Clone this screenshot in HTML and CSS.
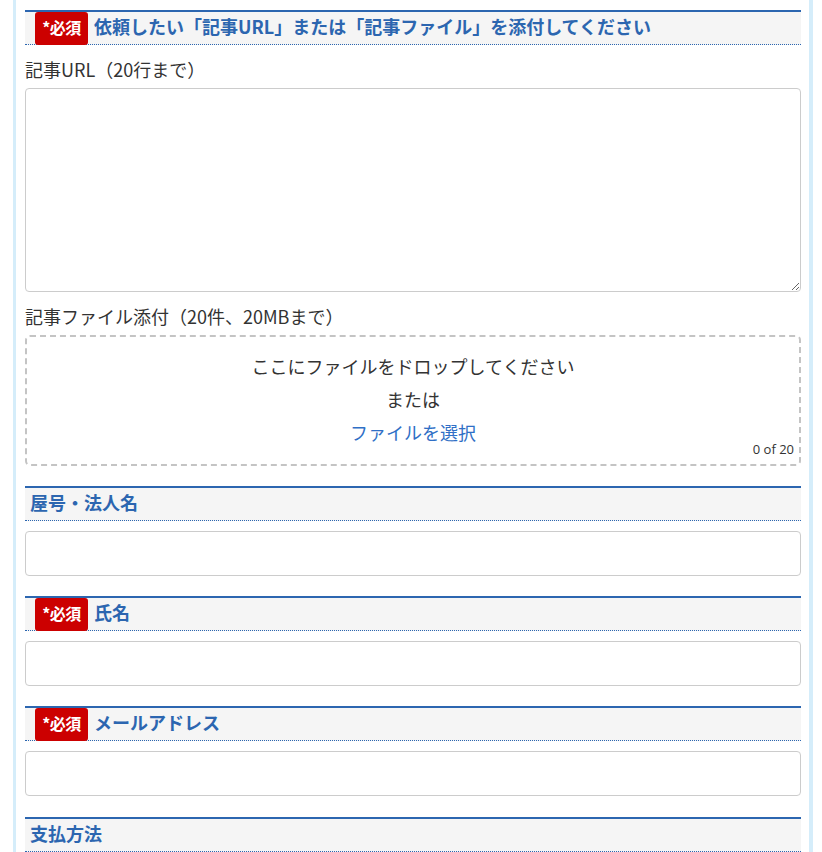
FILE: index.html
```html
<!DOCTYPE html>
<html lang="ja">
<head>
<meta charset="utf-8">
<title>フォーム</title>
<link rel="stylesheet" href="styles.css">
</head>
<body>
<div class="form">
  <section class="field field-first">
    <h3 class="field-head"><span class="req">*必須</span><span class="head-text">依頼したい「記事URL」または「記事ファイル」を添付してください</span></h3>
    <label class="sub-label">記事URL（20行まで）</label>
    <textarea class="ta"></textarea>
    <label class="sub-label">記事ファイル添付（20件、20MBまで）</label>
    <div class="drop">
      <p class="drop-line">ここにファイルをドロップしてください</p>
      <p class="drop-line">または</p>
      <p class="drop-line"><a class="drop-link">ファイルを選択</a></p>
      <span class="drop-count">0 of 20</span>
    </div>
  </section>
  <section class="field">
    <h3 class="field-head plain"><span class="head-text">屋号・法人名</span></h3>
    <input class="inp" type="text">
  </section>
  <section class="field">
    <h3 class="field-head"><span class="req">*必須</span><span class="head-text">氏名</span></h3>
    <input class="inp" type="text">
  </section>
  <section class="field">
    <h3 class="field-head"><span class="req">*必須</span><span class="head-text">メールアドレス</span></h3>
    <input class="inp" type="email">
  </section>
  <section class="field field-last">
    <h3 class="field-head plain"><span class="head-text">支払方法</span></h3>
  </section>
</div>
</body>
</html>
```

FILE: styles.css
```css
* { box-sizing: border-box; }
html, body { margin: 0; padding: 0; background: #fff; }
body {
  font-family: "Noto Sans CJK JP", "Noto Sans", sans-serif;
  color: #333;
  font-size: 16px;
}
.form {
  margin-left: 13px;
  width: 800px;
  min-height: 852px;
  border-left: 3px solid #d5edfa;
  border-right: 4px solid #d5edfa;
  padding: 10px 8px 0 9px;
}
.field { margin-top: 20px; }
.field-first { margin-top: 0; }
.field-last { margin-top: 21px; }
.field-head {
  margin: 0;
  height: 35px;
  display: flex;
  align-items: stretch;
  background: #f5f5f5;
  border-top: 2px solid #2c66b0;
  border-bottom: 1px dotted #2c66b0;
  padding-left: 10px;
  color: #2c66b0;
  font-size: 18px;
  font-weight: bold;
}
.field-head.plain { padding-left: 5px; }
.req {
  background: #cc0000;
  color: #fff;
  border-radius: 3px;
  font-size: 16px;
  font-weight: bold;
  width: 53px;
  margin-bottom: -1px;
  display: flex;
  align-items: center;
  justify-content: center;
  padding-bottom: 3px;
  letter-spacing: -0.5px;
  margin-right: 6px;
}
.head-text {
  display: flex;
  align-items: center;
  padding-bottom: 4px;
  line-height: 24px;
}
.sub-label {
  display: block;
  padding: 12px 0 6px;
  line-height: 25px;
  font-size: 18px;
  color: #333;
}
.ta {
  display: block;
  width: 100%;
  height: 204px;
  border: 1px solid #ccc;
  border-radius: 4px;
  resize: vertical;
  margin: 0;
  font-family: inherit;
}
.drop {
  position: relative;
  height: 131px;
  margin-bottom: 1px;
  border: 2px dashed #c4c4c4;
  border-radius: 5px;
  padding-top: 13px;
  text-align: center;
}
.drop-line {
  margin: 0;
  line-height: 33px;
  font-size: 18px;
  color: #333;
}
.drop-link { color: #2f6fc6; cursor: pointer; }
.drop-count {
  position: absolute;
  right: 5px;
  bottom: 7px;
  font-size: 13px;
  line-height: 16px;
  color: #333;
  font-family: "Open Sans", "Noto Sans", sans-serif;
}
.inp {
  display: block;
  width: 100%;
  height: 45px;
  margin-top: 10px;
  border: 1px solid #ccc;
  border-radius: 4px;
  padding: 0 10px;
  font-family: inherit;
  font-size: 16px;
}
```
